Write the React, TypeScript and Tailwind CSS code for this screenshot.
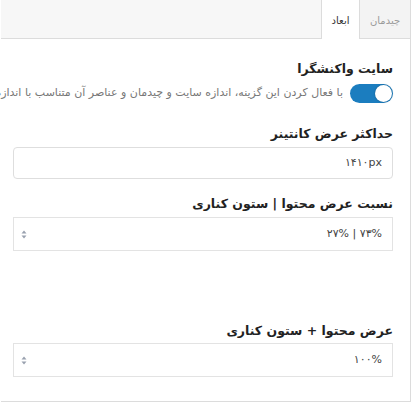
import React from "react";

const FONT = { fontFamily: '"DejaVu Sans", "Noto Sans", sans-serif' };

function UpDown() {
  return (
    <svg width="6" height="9" viewBox="0 0 6 9" className="text-gray-400">
      <path d="M3 0.5 L5.5 3.5 H0.5 Z" fill="currentColor" />
      <path d="M3 8.5 L5.5 5.5 H0.5 Z" fill="currentColor" />
    </svg>
  );
}

function SelectBox({ value }: { value: string }) {
  return (
    <div className="flex h-[34px] items-center justify-between border border-[#e3e3e3] bg-white pr-[10px] pl-[7px]">
      <span dir="ltr" className="text-[11px] text-[#444]">
        {value}
      </span>
      <UpDown />
    </div>
  );
}

export default function App() {
  return (
    <div dir="rtl" style={FONT} className="h-[403px] w-[411px] overflow-hidden bg-white">
      <div className="h-[402px] w-[410px] border-r border-b border-[#dcdcdc]">
        <div className="flex h-[39px]">
          <div className="flex w-[50px] items-center justify-center border-b border-[#dcdcdc] bg-[#f3f3f3] pt-[2px] text-[10px] text-[#9a9a9a]">
            چیدمان
          </div>
          <div className="flex w-[39px] items-center justify-center border-r border-l border-[#dcdcdc] bg-white pt-[2px] text-[10px] text-[#333]">
            ابعاد
          </div>
          <div className="flex-1 border-b border-[#dcdcdc] bg-[#f7f7f7]" />
        </div>

        <div className="flex flex-col pr-[17px] pl-[12px]">
          <h3 className="mt-[20px] text-[12.5px] leading-5 font-bold text-[#222]">سایت واکنشگرا</h3>
          <div className="mt-[5px] flex items-center gap-[7px] whitespace-nowrap">
            <div className="flex h-[19px] w-[43px] shrink-0 items-center justify-start rounded-full bg-[#1b7dbf] px-[1px]">
              <div className="h-[17px] w-[17px] rounded-full bg-white shadow-[0_0_2px_rgba(0,0,0,0.3)]" />
            </div>
            <span className="text-[11px] text-[#777]">
              با فعال کردن این گزینه، اندازه سایت و چیدمان و عناصر آن متناسب با اندازه صفحه
            </span>
          </div>

          <h3 className="mt-[21px] text-[12.5px] leading-5 font-bold text-[#222]">حداکثر عرض کانتینر</h3>
          <div className="mt-[3px] flex h-[32px] items-center rounded-[4px] border border-[#dedede] bg-white pr-[10px]">
            <span dir="ltr" className="text-[11px] text-[#444]">
              ۱۴۱۰px
            </span>
          </div>

          <h3 className="mt-[15px] text-[12.5px] leading-5 font-bold text-[#222]">نسبت عرض محتوا | ستون کناری</h3>
          <div className="mt-[3px]">
            <SelectBox value="۲۷% | ۷۳%" />
          </div>

          <h3 className="mt-[70px] text-[12.5px] leading-5 font-bold text-[#222]">عرض محتوا + ستون کناری</h3>
          <div className="mt-[2px]">
            <SelectBox value="۱۰۰%" />
          </div>
        </div>
      </div>
    </div>
  );
}
